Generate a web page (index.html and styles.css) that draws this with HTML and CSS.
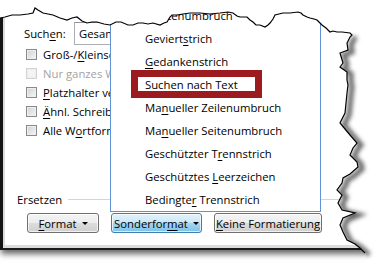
FILE: index.html
```html
<!DOCTYPE html>
<html lang="de">
<head>
    <meta charset="UTF-8">
    <title>Suchen und Ersetzen - Sonderformat</title>
    <link rel="stylesheet" href="styles.css">
</head>
<body>
    <div class="dialog">
        <div class="search-row">
            <span class="search-label">Such<u>e</u>n:</span>
            <div class="select">Gesamt</div>
        </div>
        <ul class="options">
            <li><span class="check"></span><span>Groß-/<u>K</u>leinschreibung beachten</span></li>
            <li class="disabled"><span class="check"></span><span>Nur ganzes Wort suchen</span></li>
            <li><span class="check"></span><span><u>P</u>latzhalter verwenden</span></li>
            <li><span class="check"></span><span><u>Ä</u>hnl. Schreibweise (Englisch)</span></li>
            <li><span class="check"></span><span>Alle W<u>o</u>rtformen suchen (Englisch)</span></li>
        </ul>
        <div class="replace">
            <span>Ersetzen</span>
            <span class="rule"></span>
        </div>
        <div class="buttons">
            <button class="btn btn-format"><span><u>F</u>ormat</span><span class="caret"></span></button>
            <button class="btn btn-special active"><span>Sonderfor<u>m</u>at</span><span class="caret"></span></button>
            <button class="btn btn-clear"><span><u>K</u>eine Formatierung</span></button>
        </div>

        <!-- popup menu of the Sonderformat button -->
        <ul class="menu">
            <li>Spaltenumbruch</li>
            <li>Geviert<u>s</u>trich</li>
            <li><u>G</u>edankenstrich</li>
            <li class="marked">Suchen nach Te<u>x</u>t</li>
            <li>Ma<u>n</u>ueller Zeilenumbruch</li>
            <li>Ma<u>n</u>ueller Seitenumbruch</li>
            <li>Geschützter T<u>r</u>ennstrich</li>
            <li>Geschütztes <u>L</u>eerzeichen</li>
            <li>Bedingte<u>r</u> Trennstrich</li>
        </ul>
    </div>

    <!-- torn paper edge drawn over the screenshot -->
    <svg class="tear" width="383" height="269" viewBox="0 0 383 269">
        <defs>
            <clipPath id="outside">
                <path d="M0,0 L0,18 L5,17 L12,15 L20,15 L28,14 L33,13 L35,8 L38,10 L43,13 L53,15 L60,18 L67,20 L72,18 L77,17 L82,21 L87,23 L92,22 L97,22 L104,24 L110,25 L116,22 L121,22 L128,25 L133,25 L138,23 L143,23 L148,24 L153,23 L160,25 L164,23 L167,22 L170,17 L172,15 L177,15 L183,14 L190,13 L200,13 L210,14 L220,13 L228,12 L233,13 L237,16 L240,17 L247,17 L250,20 L253,22 L256,25 L260,25 L265,27 L268,25 L270,23 L273,19 L275,15 L279,14 L283,13 L290,13 L298,12 L301,13 L303,15 L307,17 L310,18 L314,19 L317,20 L319,22 L322,25 L326,28 L330,32 L333,31 L337,32 L342,32 L350,33 L352,35 L350,37 L347,43 L348,50 L340,53 L343,63 L340,67 L347,72 L347,80 L348,85 L347,93 L346,103 L345,113 L340,123 L345,129 L350,135 L357,143 L353,148 L350,155 L357,162 L358,167 L350,174 L343,178 L342,183 L337,190 L342,195 L338,203 L342,210 L355,213 L343,218 L340,225 L343,232 L347,240 L355,244 L360,248 L365,253 L368,269 L383,269 L383,0 Z"/>
            </clipPath>
            <filter id="soft" x="-20%" y="-20%" width="140%" height="140%">
                <feGaussianBlur stdDeviation="2.2"/>
            </filter>
        </defs>
        <path class="tear-paper" d="M0,0 L0,18 L5,17 L12,15 L20,15 L28,14 L33,13 L35,8 L38,10 L43,13 L53,15 L60,18 L67,20 L72,18 L77,17 L82,21 L87,23 L92,22 L97,22 L104,24 L110,25 L116,22 L121,22 L128,25 L133,25 L138,23 L143,23 L148,24 L153,23 L160,25 L164,23 L167,22 L170,17 L172,15 L177,15 L183,14 L190,13 L200,13 L210,14 L220,13 L228,12 L233,13 L237,16 L240,17 L247,17 L250,20 L253,22 L256,25 L260,25 L265,27 L268,25 L270,23 L273,19 L275,15 L279,14 L283,13 L290,13 L298,12 L301,13 L303,15 L307,17 L310,18 L314,19 L317,20 L319,22 L322,25 L326,28 L330,32 L333,31 L337,32 L342,32 L350,33 L352,35 L350,37 L347,43 L348,50 L340,53 L343,63 L340,67 L347,72 L347,80 L348,85 L347,93 L346,103 L345,113 L340,123 L345,129 L350,135 L357,143 L353,148 L350,155 L357,162 L358,167 L350,174 L343,178 L342,183 L337,190 L342,195 L338,203 L342,210 L355,213 L343,218 L340,225 L343,232 L347,240 L355,244 L360,248 L365,253 L368,269 L383,269 L383,0 Z"/>
        <g clip-path="url(#outside)">
            <path class="tear-shadow" filter="url(#soft)" transform="translate(4,2)" d="M352,35 L350,37 L347,43 L348,50 L340,53 L343,63 L340,67 L347,72 L347,80 L348,85 L347,93 L346,103 L345,113 L340,123 L345,129 L350,135 L357,143 L353,148 L350,155 L357,162 L358,167 L350,174 L343,178 L342,183 L337,190 L342,195 L338,203 L342,210 L355,213 L343,218 L340,225 L343,232 L347,240 L355,244 L360,248 L365,253"/>
        </g>
        <path class="tear-line" d="M0,18 L5,17 L12,15 L20,15 L28,14 L33,13 L35,8 L38,10 L43,13 L53,15 L60,18 L67,20 L72,18 L77,17 L82,21 L87,23 L92,22 L97,22 L104,24 L110,25 L116,22 L121,22 L128,25 L133,25 L138,23 L143,23 L148,24 L153,23 L160,25 L164,23 L167,22 L170,17 L172,15 L177,15 L183,14 L190,13 L200,13 L210,14 L220,13 L228,12 L233,13 L237,16 L240,17 L247,17 L250,20 L253,22 L256,25 L260,25 L265,27 L268,25 L270,23 L273,19 L275,15 L279,14 L283,13 L290,13 L298,12 L301,13 L303,15 L307,17 L310,18 L314,19 L317,20 L319,22 L322,25 L326,28 L330,32 L333,31 L337,32 L342,32 L350,33 L352,35 L350,37 L347,43 L348,50 L340,53 L343,63 L340,67 L347,72 L347,80 L348,85 L347,93 L346,103 L345,113 L340,123 L345,129 L350,135 L357,143 L353,148 L350,155 L357,162 L358,167 L350,174 L343,178 L342,183 L337,190 L342,195 L338,203 L342,210 L355,213 L343,218 L340,225 L343,232 L347,240 L355,244 L360,248 L365,253"/>
    </svg>
</body>
</html>
```

FILE: styles.css
```css
body {
    margin: 0;
    width: 383px;
    height: 269px;
    background: #ffffff;
    color: #000000;
    font-family: 'Open Sans', 'Noto Sans', sans-serif;
    font-size: 11.3px;
    font-kerning: none;
    overflow: hidden;
    position: relative;
}
u {
    text-decoration-thickness: 1px;
    text-underline-offset: 2px;
}
.dialog {
    position: relative;
    box-sizing: border-box;
    width: 372px;
    height: 250px;
    padding: 22px 0 0 14px;
    background: #ffffff;
    border-left: 3px solid #141414;
    border-bottom: 2px solid #1c1c1c;
    box-shadow: inset 2px -3px 0 #dcdcdc, 0 5px 6px -1px rgba(0, 0, 0, 0.6);
}
.search-row {
    display: flex;
    align-items: center;
    height: 23px;
    margin-left: 7px;
}
.search-label {
    width: 50px;
}
.select {
    box-sizing: border-box;
    width: 120px;
    height: 23px;
    line-height: 21px;
    padding-left: 4px;
    border: 1px solid #abadb3;
    border-top-color: #8e9199;
}
.options {
    list-style: none;
    margin: 0 0 0 9px;
    padding: 0;
}
.options li {
    display: flex;
    align-items: center;
    gap: 6px;
    height: 19px;
    white-space: nowrap;
}
.check {
    flex: none;
    box-sizing: border-box;
    width: 11px;
    height: 11px;
    border: 1px solid #8a8a8a;
    background: linear-gradient(135deg, #cdd0d5, #f7f7f7);
    box-shadow: inset 0 0 0 1px #eeeeee;
}
.options li.disabled {
    color: #a3a3a3;
}
.disabled .check {
    border-color: #d2d2d2;
    background: #f4f4f4;
}
.replace {
    display: flex;
    align-items: center;
    gap: 6px;
    height: 16px;
    margin-top: 51px;
}
.rule {
    flex: 1;
    height: 1px;
    background: #cad8e2;
}
.buttons {
    display: flex;
    gap: 12px;
    margin: 6px 0 0 10px;
}
.btn {
    display: flex;
    align-items: center;
    justify-content: center;
    gap: 5px;
    height: 20px;
    padding: 0;
    font: inherit;
    color: #000000;
    white-space: nowrap;
    border: 1px solid #707070;
    border-radius: 3px;
    background: linear-gradient(#f4f4f4 0%, #ececec 50%, #dcdcdc 51%, #d0d0d0 100%);
    box-shadow: inset 0 0 0 1px rgba(255, 255, 255, 0.7);
}
.btn-format {
    width: 72px;
}
.btn-special {
    width: 91px;
}
.btn-clear {
    width: 108px;
}
.btn.active {
    border-color: #3c7fb1;
    background: linear-gradient(#e3f3fc 0%, #c7e6f7 50%, #a6d6f1 51%, #7fc0e6 100%);
}
.caret {
    width: 0;
    height: 0;
    border-left: 3px solid transparent;
    border-right: 3px solid transparent;
    border-top: 3px solid #000000;
}
.menu {
    position: absolute;
    left: 107px;
    top: 2px;
    width: 211px;
    box-sizing: border-box;
    margin: 0;
    padding: 2px 0 0 0;
    list-style: none;
    background: #ffffff;
    border: 1px solid #5f93d6;
    border-top: none;
}
.menu li {
    position: relative;
    height: 23px;
    line-height: 23px;
    padding-left: 34px;
    white-space: nowrap;
}
.menu li.marked::after {
    content: '';
    position: absolute;
    left: 20px;
    top: -3px;
    width: 131px;
    height: 28px;
    box-sizing: border-box;
    border: 7px solid #9b1b20;
}
.tear {
    position: absolute;
    left: 0;
    top: 0;
}
.tear-paper {
    fill: #ffffff;
}
.tear-shadow {
    fill: none;
    stroke: #4a4a4a;
    stroke-width: 5;
    opacity: 0.85;
}
.tear-line {
    fill: none;
    stroke: #000000;
    stroke-width: 1.2;
}
```
